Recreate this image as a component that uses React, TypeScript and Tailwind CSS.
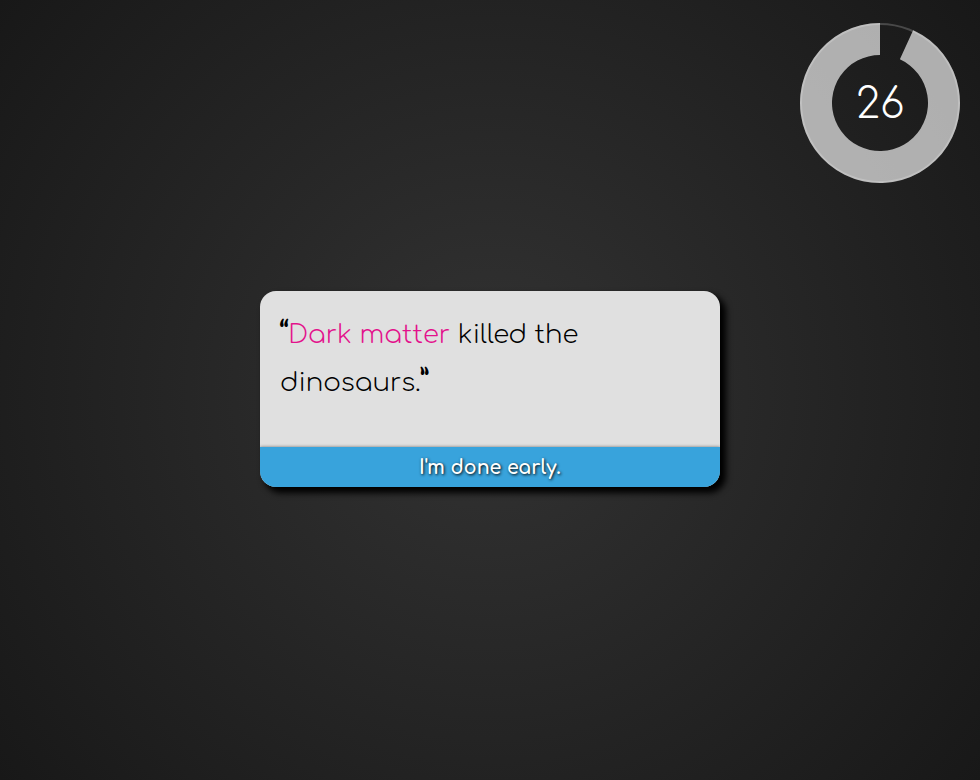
const TURN_DEGREES = 360;
const REMAINING = 0.932;

function point(radius: number, degrees: number) {
  const angle = ((degrees - 90) * Math.PI) / 180;
  return `${80 + radius * Math.cos(angle)} ${80 + radius * Math.sin(angle)}`;
}

function Timer({ seconds }: { seconds: number }) {
  const start = (1 - REMAINING) * TURN_DEGREES;
  const ring = `M${point(80, start)}A80 80 0 1 1 80 0V32A48 48 0 1 0 ${point(48, start)}Z`;
  return (
    <div role="timer" className="grid size-40 place-items-center">
      <svg viewBox="0 0 160 160" className="col-start-1 row-start-1 size-40" aria-hidden="true">
        <path d={ring} fill="#fff" fillOpacity="0.65" />
        <circle cx="80" cy="80" r="79" fill="none" stroke="#fff" strokeOpacity="0.2" strokeWidth="2" />
      </svg>
      <span className="col-start-1 row-start-1 pt-1 text-[42px] leading-none font-light text-white">{seconds}</span>
    </div>
  );
}

export default function App() {
  return (
    <main className="grid min-h-screen grid-rows-[1fr_auto_1fr] bg-[#181818] bg-[radial-gradient(circle_at_center,#333333_0%,#181818_100%)] pb-0.5 font-['Comfortaa','Lato',sans-serif]">
      <header className="flex justify-end px-5 pt-[23px]">
        <Timer seconds={26} />
      </header>
      <section className="mx-auto flex w-full max-w-[460px] flex-col overflow-hidden rounded-2xl bg-[#e0e0e0] shadow-[5px_5px_6px_1px_#000]">
        <p className="min-h-39 px-5 py-5 text-[26px] leading-12 font-light text-black">
          <span className="text-[28px] leading-none font-bold">“</span>
          <span className="text-[#e3128c]">Dark matter</span> killed the dinosaurs.
          <span className="text-[28px] leading-none font-bold">”</span>
        </p>
        <button
          type="button"
          className="h-10 bg-[#38a3dc] pt-0.5 text-[19px] font-bold text-white shadow-[0_0_3px_rgba(0,0,0,0.5)] [text-shadow:1px_1px_3px_#000]"
        >
          I'm done early.
        </button>
      </section>
    </main>
  );
}
